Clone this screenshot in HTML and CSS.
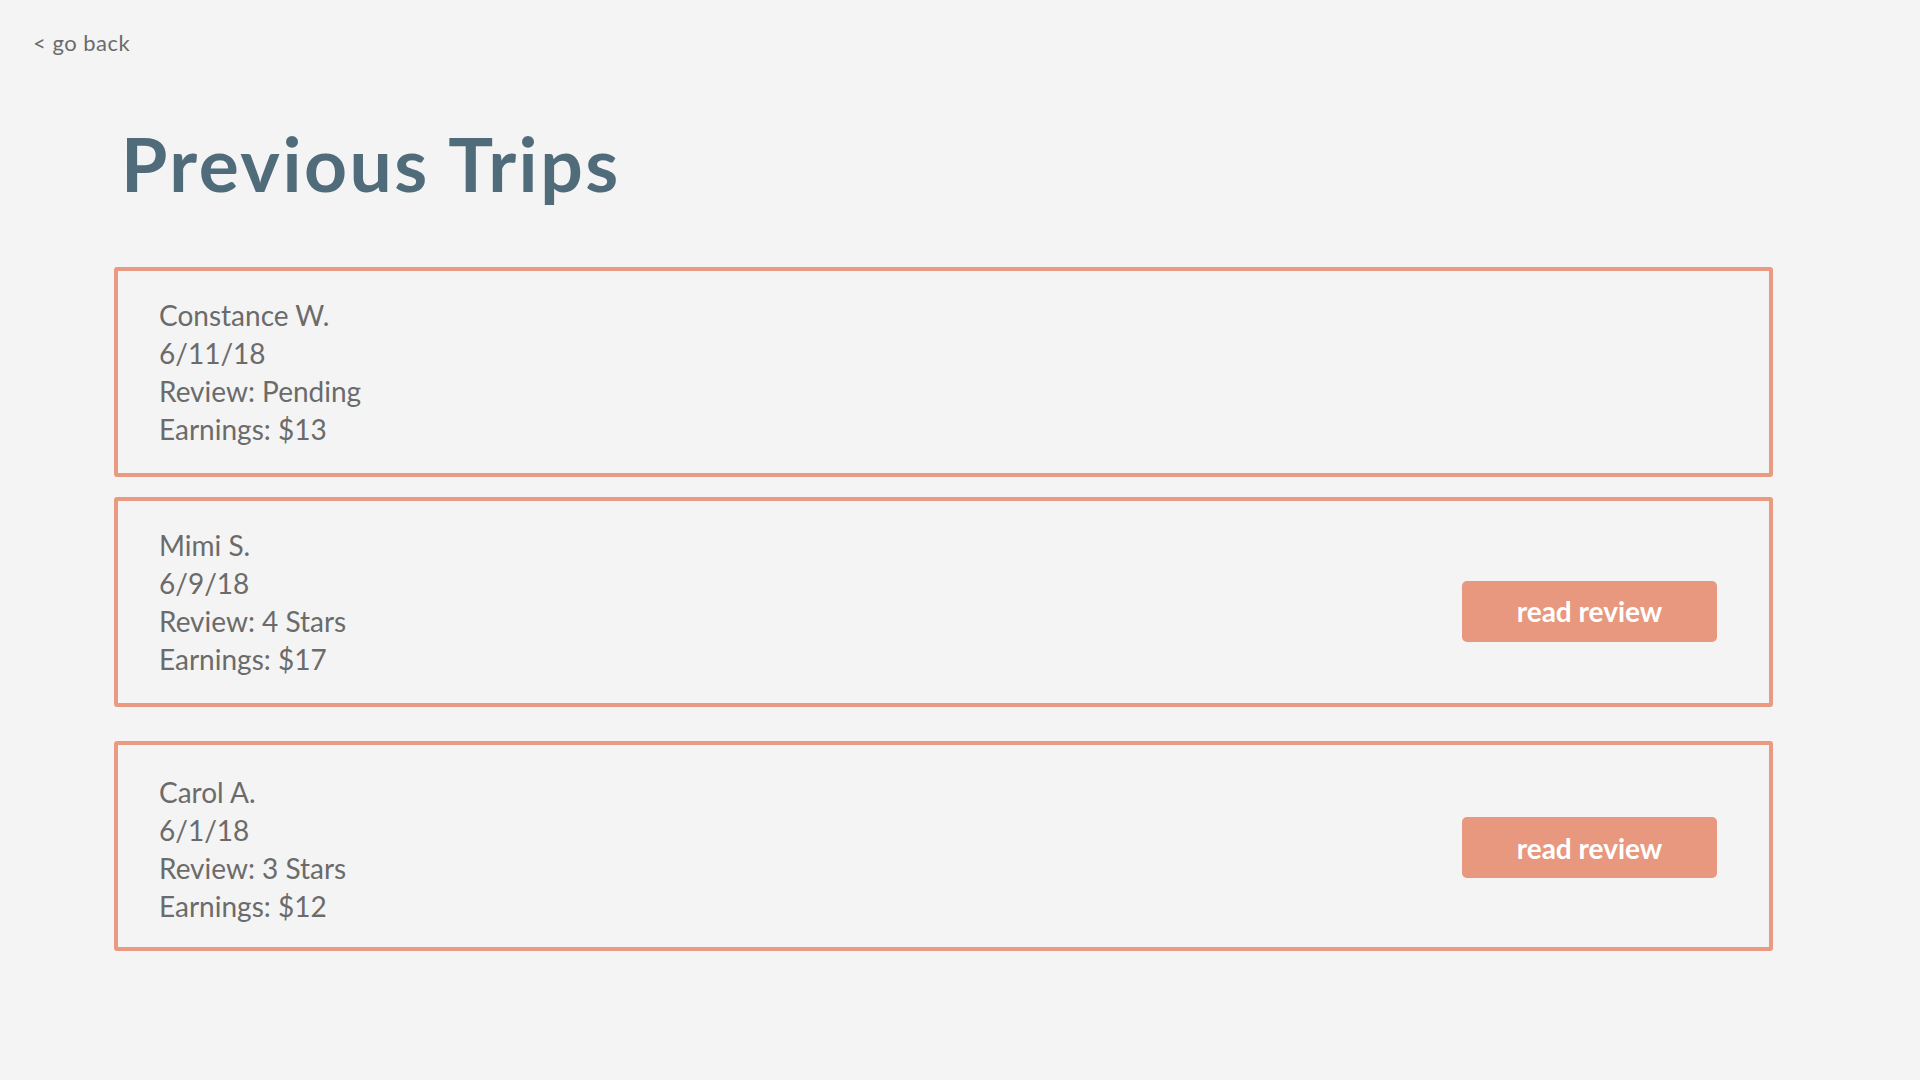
FILE: index.html
```html
<!DOCTYPE html>
<html lang="en">
<head>
<meta charset="utf-8">
<title>Previous Trips</title>
<link rel="stylesheet" href="styles.css">
</head>
<body>
<header class="topbar">
  <a class="back-link" href="#">&lt; go back</a>
</header>
<main class="page">
  <h1 class="page-title">Previous Trips</h1>
  <section class="trip-list">
    <article class="trip">
      <div class="trip-info">
        <div class="trip-line">Constance W.</div>
        <div class="trip-line">6/11/18</div>
        <div class="trip-line">Review: Pending</div>
        <div class="trip-line">Earnings: $13</div>
      </div>
    </article>
    <article class="trip">
      <div class="trip-info">
        <div class="trip-line">Mimi S.</div>
        <div class="trip-line">6/9/18</div>
        <div class="trip-line">Review: 4 Stars</div>
        <div class="trip-line">Earnings: $17</div>
      </div>
      <button class="review-btn review-btn--low" type="button">read review</button>
    </article>
    <article class="trip trip--spaced">
      <div class="trip-info">
        <div class="trip-line">Carol A.</div>
        <div class="trip-line">6/1/18</div>
        <div class="trip-line">Review: 3 Stars</div>
        <div class="trip-line">Earnings: $12</div>
      </div>
      <button class="review-btn" type="button">read review</button>
    </article>
  </section>
</main>
</body>
</html>
```
FILE: styles.css
```css
* { box-sizing: border-box; }

html, body {
  margin: 0;
  padding: 0;
  background: #f4f4f4;
}

body {
  font-family: "Lato", "Open Sans", sans-serif;
  color: #6b6b6b;
  width: 1920px;
  min-height: 1080px;
}

.topbar {
  padding: 30px 0 0 33px;
}

.back-link {
  display: inline-block;
  font-size: 22px;
  line-height: 26px;
  letter-spacing: 0.5px;
  color: #6b6b6b;
  text-decoration: none;
}

.page {
  padding: 0 147px 0 114px;
}

.page-title {
  margin: 62px 0 0 7px;
  font-size: 75px;
  line-height: 90px;
  font-weight: 700;
  letter-spacing: 2.5px;
  color: #506c7b;
}

.trip-list {
  margin-top: 59px;
  display: flex;
  flex-direction: column;
  gap: 20px;
}

.trip {
  display: flex;
  align-items: center;
  justify-content: space-between;
  height: 210px;
  border: 4px solid #e99a80;
  border-radius: 3px;
  padding: 25px 52px 25px 41px;
}

.trip--spaced {
  margin-top: 14px;
  padding-top: 28px;
}

.trip-info {
  align-self: flex-start;
}

.trip-line {
  font-size: 28px;
  line-height: 38px;
  color: #6b6b6b;
}

.review-btn {
  width: 255px;
  height: 61px;
  border: none;
  border-radius: 5px;
  background: #e8987e;
  color: #ffffff;
  font-family: "Lato", "Open Sans", sans-serif;
  font-size: 28px;
  font-weight: 700;
  padding: 0;
  cursor: pointer;
}

.review-btn--low {
  margin-top: 18px;
}
```
